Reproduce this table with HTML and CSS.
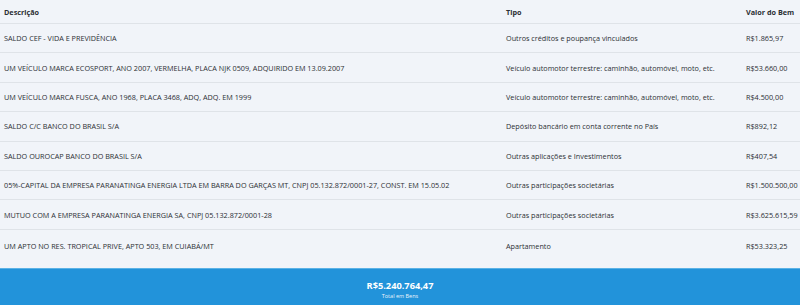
FILE: index.html
```html
<!DOCTYPE html>
<html lang="pt-BR">
<head>
<meta charset="utf-8">
<link rel="stylesheet" href="styles.css">
</head>
<body>
<div class="page">
  <table class="bens">
    <colgroup>
      <col class="c-desc"><col class="c-tipo"><col class="c-valor">
    </colgroup>
    <thead>
      <tr><th>Descrição</th><th>Tipo</th><th>Valor do Bem</th></tr>
    </thead>
    <tbody>
      <tr><td>SALDO CEF - VIDA E PREVIDÊNCIA</td><td>Outros créditos e poupança vinculados</td><td>R$1.865,97</td></tr>
      <tr><td>UM VEÍCULO MARCA ECOSPORT, ANO 2007, VERMELHA, PLACA NJK 0509, ADQUIRIDO EM 13.09.2007</td><td>Veículo automotor terrestre: caminhão, automóvel, moto, etc.</td><td>R$53.660,00</td></tr>
      <tr><td>UM VEÍCULO MARCA FUSCA, ANO 1968, PLACA 3468, ADQ, ADQ. EM 1999</td><td>Veículo automotor terrestre: caminhão, automóvel, moto, etc.</td><td>R$4.500,00</td></tr>
      <tr><td>SALDO C/C BANCO DO BRASIL S/A</td><td>Depósito bancário em conta corrente no País</td><td>R$892,12</td></tr>
      <tr><td>SALDO OUROCAP BANCO DO BRASIL S/A</td><td>Outras aplicações e Investimentos</td><td>R$407,54</td></tr>
      <tr><td>05%-CAPITAL DA EMPRESA PARANATINGA ENERGIA LTDA EM BARRA DO GARÇAS MT, CNPJ 05.132.872/0001-27, CONST. EM 15.05.02</td><td>Outras participações societárias</td><td>R$1.500.500,00</td></tr>
      <tr><td>MUTUO COM A EMPRESA PARANATINGA ENERGIA SA, CNPJ 05.132.872/0001-28</td><td>Outras participações societárias</td><td>R$3.625.615,59</td></tr>
      <tr class="last"><td>UM APTO NO RES. TROPICAL PRIVE, APTO 503, EM CUIABÁ/MT</td><td>Apartamento</td><td>R$53.323,25</td></tr>
    </tbody>
  </table>
  <div class="total">
    <div class="total-value">R$5.240.764,47</div>
    <div class="total-label">Total em Bens</div>
  </div>
</div>
</body>
</html>
```
FILE: styles.css
```css
html, body {
  margin: 0;
  padding: 0;
  background: #f1f4f9;
  overflow: hidden;
}
.page {
  width: 800px;
  overflow: hidden;
  font-family: "Open Sans", "DejaVu Sans", sans-serif;
  color: #2b2f33;
}
.bens {
  border-collapse: collapse;
  table-layout: fixed;
  width: 830px;
  font-size: 7.25px;
}
.c-desc { width: 506px; }
.c-tipo { width: 240px; }
.c-valor { width: 84px; }
.bens th {
  text-align: left;
  font-weight: 700;
  height: 23px;
  padding: 0 0 0 4px;
  border-bottom: 1px solid #dfe3e8;
  white-space: nowrap;
}
.bens th + th, .bens td + td { padding-left: 0; }
.bens td {
  height: 28.4px;
  padding: 0 0 0 4px;
  border-bottom: 1px solid #dfe3e8;
  white-space: nowrap;
  vertical-align: middle;
}
.bens tr.last td {
  border-bottom: none;
  height: 39px;
  vertical-align: top;
  padding-top: 11px;
  box-sizing: border-box;
}
.total {
  background: #2293da;
  border-top: 1px solid #5bb2e6;
  height: 36px;
  color: #fff;
  text-align: center;
  display: flex;
  flex-direction: column;
  align-items: center;
  justify-content: center;
}
.total-value {
  font-weight: 700;
  font-size: 9.25px;
  line-height: 12px;
  margin-top: 7px;
}
.total-label {
  font-size: 5.5px;
  line-height: 9px;
  opacity: 0.9;
}
```
